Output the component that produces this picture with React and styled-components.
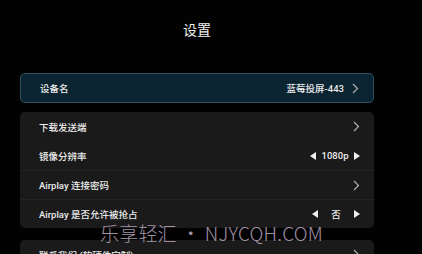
import React from "react";
import styled, { createGlobalStyle } from "styled-components";

const Global = createGlobalStyle`
  html, body { margin: 0; padding: 0; background: #000; }
  body { font-family: Roboto, "Noto Sans CJK SC", sans-serif; }
`;

const Page = styled.div`
  position: relative;
  width: 422px;
  height: 254px;
  overflow: hidden;
  background: #020202;
  box-sizing: border-box;
  padding: 0 48px 0 20px;
  display: flex;
  flex-direction: column;
`;

const Title = styled.div`
  margin-top: 19px;
  height: 20px;
  line-height: 20px;
  text-align: center;
  color: #f2f2f2;
  font-size: 14px;
  font-family: "Noto Sans CJK SC", sans-serif;
`;

const Card = styled.div`
  display: flex;
  flex-direction: column;
  border-radius: 5px;
  overflow: hidden;
  background: ${(p) => (p.$active ? "#0b2432" : "#1a1a1a")};
  border: ${(p) => (p.$active ? "1px solid #2f4d5e" : "none")};
  margin-top: ${(p) => p.$mt}px;
  flex-shrink: 0;
`;

const Row = styled.div`
  display: flex;
  align-items: center;
  justify-content: space-between;
  height: ${(p) => p.$h || 29}px;
  box-sizing: border-box;
  padding: 0 14px 0 19px;
  border-top: ${(p) => (p.$divider ? "1px solid #242424" : "none")};
  color: #ececec;
  font-size: 9.5px;
  font-weight: 500;
`;

const Label = styled.span`
  white-space: nowrap;
`;

const Right = styled.div`
  display: flex;
  align-items: center;
  color: #e8e8e8;
  font-size: 9.5px;
`;

const Value = styled.span`
  margin-right: 8px;
  white-space: nowrap;
`;

const Selector = styled.div`
  display: flex;
  align-items: center;
  justify-content: space-between;
  width: ${(p) => p.$w}px;
  color: #eeeeee;
  font-size: 9.5px;
`;

const Watermark = styled.div`
  position: absolute;
  left: 100px;
  top: 219px;
  font-size: 19px;
  font-weight: 300;
  letter-spacing: 0.2px;
  color: #a191a4;
  font-family: "Noto Sans CJK SC", sans-serif;
  white-space: nowrap;
  pointer-events: none;
`;

const Chevron = () => (
  <svg width="7" height="11" viewBox="0 0 7 11" fill="none">
    <polyline points="1,1 5.5,5.5 1,10" stroke="#b0b0b0" strokeWidth="1.2" />
  </svg>
);

const Tri = ({ dir }) => (
  <svg width="6" height="8" viewBox="0 0 6 8">
    {dir === "left" ? (
      <polygon points="6,0 6,8 0,4" fill="#f0f0f0" />
    ) : (
      <polygon points="0,0 0,8 6,4" fill="#f0f0f0" />
    )}
  </svg>
);

export default function App() {
  return (
    <>
      <Global />
      <Page>
        <Title>设置</Title>
        <Card $active $mt={34}>
          <Row $h={28}>
            <Label>设备名</Label>
            <Right>
              <Value>蓝莓投屏-443</Value>
              <Chevron />
            </Right>
          </Row>
        </Card>
        <Card $mt={9}>
          <Row>
            <Label>下载发送端</Label>
            <Right>
              <Chevron />
            </Right>
          </Row>
          <Row>
            <Label>镜像分辨率</Label>
            <Selector $w={50}>
              <Tri dir="left" />
              <span>1080p</span>
              <Tri dir="right" />
            </Selector>
          </Row>
          <Row $divider>
            <Label>Airplay 连接密码</Label>
            <Right>
              <Chevron />
            </Right>
          </Row>
          <Row $divider>
            <Label>Airplay 是否允许被抢占</Label>
            <Selector $w={48}>
              <Tri dir="left" />
              <span>否</span>
              <Tri dir="right" />
            </Selector>
          </Row>
        </Card>
        <Card $mt={12}>
          <Row>
            <Label>联系我们 (软硬件定制)</Label>
            <Right>
              <Chevron />
            </Right>
          </Row>
        </Card>
        <Watermark>乐享轻汇 • NJYCQH.COM</Watermark>
      </Page>
    </>
  );
}
